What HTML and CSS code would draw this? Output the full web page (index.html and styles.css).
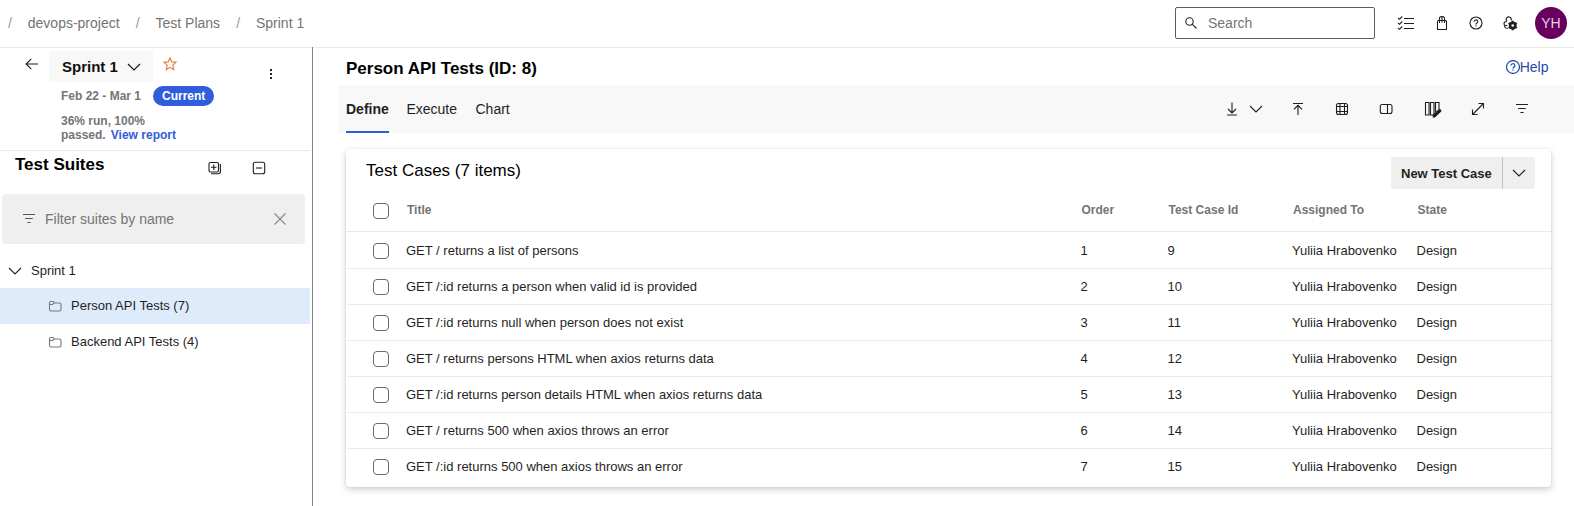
FILE: index.html
```html
<!DOCTYPE html>
<html lang="en">
<head>
<meta charset="utf-8">
<title>Sprint 1 - Test Plans</title>
<link rel="stylesheet" href="styles.css">
</head>
<body>
<svg class="defs" width="0" height="0">
  <symbol id="chevron" viewBox="0 0 16 16"><path d="M2 5l6 6 6-6"/></symbol>
  <symbol id="filter" viewBox="0 0 16 16"><path d="M2 3.500h12M4.200 7.500h7.600M6.400 11.500h3.200"/></symbol>
  <symbol id="folder" viewBox="0 0 16 16"><path d="M2.500 11.500v-6.500q0-1.500 1.500-1.500h2.200l1.300 1.500h5q1.500 0 1.500 1.500v5q0 1.500-1.500 1.500h-8.500q-1.500 0-1.500-1.500zM2.500 6.500h3l2-1.500"/></symbol>
  <symbol id="help" viewBox="0 0 16 16"><circle cx="8" cy="8" r="6"/><path d="M6.200 6.700a1.800 1.700 0 1 1 2.700 1.400q-.9.500-.9 1.400"/><path d="M8 10.300v1.200"/></symbol>
</svg>

<header class="topbar">
  <nav class="crumbs">
    <span class="slash">/</span><span>devops-project</span>
    <span class="slash">/</span><span>Test Plans</span>
    <span class="slash">/</span><span>Sprint 1</span>
  </nav>
  <div class="search">
    <svg class="icon" viewBox="0 0 16 16"><circle cx="6.500" cy="6.500" r="3.700"/><path d="M9.200 9.200l4.300 4.300"/></svg>
    <span>Search</span>
  </div>
  <div class="tools">
    <svg class="icon wide" viewBox="0 0 18 16"><path d="M7 3.500h10M7 8.500h10M7 13.500h10" stroke-width="1.200"/><path d="M1 3l1.500 1.300 2.700-2.800M1 8l1.500 1.300 2.700-2.800M1 13l1.500 1.300 2.700-2.800"/></svg>
    <svg class="icon" viewBox="0 0 16 16"><path d="M3.500 6.500q0-1 1-1h7q1 0 1 1v8h-9zM5.500 8v-4.500q0-2 2-2h1q2 0 2 2v4.500M8 1.500v6"/></svg>
    <svg class="icon"><use href="#help"/></svg>
    <svg class="icon" viewBox="0 0 16 16"><path d="M9 5.500a2.500 2.500 0 1 0-4 .8M4.500 6.500q-2.500 0-2.500 2.300 0 1.700 1.500 1.700h1.700M2.700 10.500q-.5 2.800 3.300 2.800"/><circle cx="10.700" cy="10.500" r="2.600" stroke-width="2.600"/><path d="M10.700 5.800v2M10.700 13.200v2M6.600 8.100l1.700 1M13.100 11.900l1.700 1M6.600 12.900l1.700-1M13.100 9.100l1.700-1" stroke-width="2"/></svg>
    <span class="avatar">YH</span>
  </div>
</header>

<div class="body">
  <aside class="sidebar">
    <section class="plan">
      <svg class="icon back" viewBox="0 0 16 16"><path d="M14 8H2.300M7.300 2.800L2.100 8l5.200 5.200"/></svg>
      <div class="plan-info">
        <div class="plan-line">
          <div class="plan-name"><span>Sprint 1</span><svg class="icon"><use href="#chevron"/></svg></div>
          <svg class="icon star" viewBox="0 0 16 16"><path d="M8 1.900l1.800 4 4.200.4-3.200 2.900.9 4.400L8 11.400l-3.700 2.200.9-4.400L2 6.300l4.200-.4z"/></svg>
        </div>
        <div class="plan-dates"><span>Feb 22 - Mar 1</span><span class="pill">Current</span></div>
        <div class="plan-stats">36% run, 100%<br>passed. <a class="report">View report</a></div>
      </div>
      <svg class="icon kebab" viewBox="0 0 16 16"><path d="M7 3h2v2H7zM7 7h2v2H7zM7 11h2v2H7z"/></svg>
    </section>
    <section class="suites-head">
      <h2>Test Suites</h2>
      <svg class="icon" viewBox="0 0 16 16"><rect x="2" y="2.500" width="9.500" height="9.500" rx="1.500"/><path d="M4 7.300h5.500M6.800 4.500v5.500M13.400 4v7.500q0 2.200-2.200 2.200H4"/></svg>
      <svg class="icon" viewBox="0 0 16 16"><rect x="2.300" y="2.300" width="11.400" height="11.400" rx="2"/><path d="M5 8h6"/></svg>
    </section>
    <div class="suite-filter">
      <svg class="icon"><use href="#filter"/></svg>
      <span>Filter suites by name</span>
      <svg class="icon clear" viewBox="0 0 16 16"><path d="M2.500 2.500l11 11M13.500 2.500l-11 11"/></svg>
    </div>
    <div class="tree">
      <div class="node root"><svg class="icon"><use href="#chevron"/></svg><span>Sprint 1</span></div>
      <div class="node leaf selected"><svg class="icon"><use href="#folder"/></svg><span>Person API Tests (7)</span></div>
      <div class="node leaf"><svg class="icon"><use href="#folder"/></svg><span>Backend API Tests (4)</span></div>
    </div>
  </aside>

  <main class="main">
    <div class="page-head">
      <h1>Person API Tests (ID: 8)</h1>
      <a class="help"><svg class="icon" viewBox="1.500 1.500 13 13"><use href="#help" width="16" height="16"/></svg>Help</a>
    </div>
    <div class="tabbar">
      <div class="tabs"><span class="tab active">Define</span><span class="tab">Execute</span><span class="tab">Chart</span></div>
      <div class="actions">
        <span class="pair">
          <svg class="icon" viewBox="0 0 16 16"><path d="M8 1.500v10M4 8l4 4 4-4M3 14h10" /></svg>
          <svg class="icon"><use href="#chevron"/></svg>
        </span>
        <svg class="icon" viewBox="0 0 16 16"><path d="M8 14V4.500M4 8.300l4-4 4 4M3 2.500h10"/></svg>
        <svg class="icon" viewBox="0 0 16 16"><rect x="2.500" y="2.500" width="11" height="11" rx="2"/><path d="M6 2.500v11M10.500 2.500v11M2.500 5.500h11M2.500 10.500h11"/></svg>
        <svg class="icon" viewBox="0 0 16 16"><rect x="2.300" y="3.500" width="11.700" height="9" rx="2"/><path d="M9.500 3.500v9"/></svg>
        <svg class="icon columns" viewBox="0 0 18 18"><path d="M1.500 2.500h3.500v12.500H1.500zM6.500 2.500h3.500v12.500H6.500zM11.500 12V2.500h3.500v7"/><path d="M10.500 15.500L15.500 10.800" stroke-width="3.600" stroke-linecap="round"/><path d="M8.500 17.800l1-3.500 2.500 2.500z" fill="currentColor" stroke="none"/></svg>
        <svg class="icon" viewBox="0 0 16 16"><path d="M2.500 13.500l11-11M8.500 2.500h5v5M2.500 8.500v5h5"/></svg>
        <svg class="icon"><use href="#filter"/></svg>
      </div>
    </div>

    <section class="card">
      <div class="card-head">
        <h3>Test Cases (7 items)</h3>
        <div class="split-button"><span class="label">New Test Case</span><span class="drop"><svg class="icon"><use href="#chevron"/></svg></span></div>
      </div>
      <div class="row head"><i class="check"></i><span>Title</span><span>Order</span><span>Test Case Id</span><span>Assigned To</span><span>State</span></div>
      <div class="row"><i class="check"></i><span>GET / returns a list of persons</span><span>1</span><span>9</span><span>Yuliia Hrabovenko</span><span>Design</span></div>
      <div class="row"><i class="check"></i><span>GET /:id returns a person when valid id is provided</span><span>2</span><span>10</span><span>Yuliia Hrabovenko</span><span>Design</span></div>
      <div class="row"><i class="check"></i><span>GET /:id returns null when person does not exist</span><span>3</span><span>11</span><span>Yuliia Hrabovenko</span><span>Design</span></div>
      <div class="row"><i class="check"></i><span>GET / returns persons HTML when axios returns data</span><span>4</span><span>12</span><span>Yuliia Hrabovenko</span><span>Design</span></div>
      <div class="row"><i class="check"></i><span>GET /:id returns person details HTML when axios returns data</span><span>5</span><span>13</span><span>Yuliia Hrabovenko</span><span>Design</span></div>
      <div class="row"><i class="check"></i><span>GET / returns 500 when axios throws an error</span><span>6</span><span>14</span><span>Yuliia Hrabovenko</span><span>Design</span></div>
      <div class="row"><i class="check"></i><span>GET /:id returns 500 when axios throws an error</span><span>7</span><span>15</span><span>Yuliia Hrabovenko</span><span>Design</span></div>
    </section>
  </main>
</div>
</body>
</html>
```

FILE: styles.css
```css
* { box-sizing: border-box; }
body {
  margin: 0;
  height: 506px;
  overflow: hidden;
  display: flex;
  flex-direction: column;
  background: #fff;
  color: #1f1f1f;
  font: 13px/16px "Liberation Sans", Arial, sans-serif;
  white-space: nowrap;
}
h1, h2, h3 { margin: 0; font-size: 17px; line-height: 20px; color: #000; }
.defs { display: none; }
.icon { width: 16px; height: 16px; flex: none; display: block; fill: none; stroke: currentColor; stroke-width: 1.1; }

/* Top bar */
.topbar { height: 48px; flex: none; display: flex; align-items: center; border-bottom: 1px solid #eaeaea; padding: 0 7px 1px 8px; }
.crumbs { flex: 1; display: flex; font-size: 14px; color: #737373; }
.crumbs span { margin-right: 16.100px; }
.crumbs .slash { margin-right: 15.900px; color: #999; }
.search { width: 200px; height: 32px; display: flex; align-items: center; gap: 9px; padding-left: 7px; border: 1px solid #5c5c5c; border-radius: 2px; font-size: 14px; color: #757575; }
.search .icon { color: #222; }
.tools { display: flex; align-items: center; gap: 18px; margin-left: 22px; }
.tools .wide { width: 18px; margin-right: 1px; }
.avatar { width: 32px; height: 32px; border-radius: 50%; background: #68005f; color: #e6cfe4; font-size: 14px; line-height: 32px; text-align: center; margin-left: -1px; }

.body { flex: 1; min-height: 0; display: flex; }

/* Sidebar */
.sidebar { width: 313px; flex: none; padding-right: 2px; margin-top: -1px; border-right: 1px solid #858585; }
.plan { height: 104px; display: flex; align-items: flex-start; border-bottom: 1px solid #e8e8e8; width: 310px; }
.back { margin: 9px 9px 0 24px; }
.plan-info { flex: 1; padding-top: 4px; }
.plan-line { display: flex; gap: 9px; }
.plan-name { width: 104px; height: 31px; display: flex; align-items: center; gap: 8px; padding: 1px 0 0 13px; background: #f8f8f8; border-radius: 2px; font-size: 15px; font-weight: bold; color: #111; }
.star { color: #e07b39; margin-top: 5px; }
.plan-dates { display: flex; align-items: center; height: 20px; margin: 4px 0 0 12px; gap: 12px; font-size: 12px; font-weight: bold; color: #757575; }
.pill { height: 20px; line-height: 20px; padding: 0 9px; border-radius: 10px; background: #2f5ddb; color: #fff; }
.plan-stats { margin: 8px 0 0 12px; font: bold 12px/14px "Liberation Sans", Arial, sans-serif; color: #757575; }
.report { color: #2f5ddb; margin-left: 1.800px; }
.kebab { margin: 19px 31px 0 0; fill: #222; stroke: none; }
.suites-head { height: 43px; display: flex; padding: 4px 43px 0 15px; }
.suites-head h2 { flex: 1; }
.suites-head .icon { margin-top: 5px; margin-left: 28px; }
.suite-filter { height: 50px; width: 303px; margin-left: 2px; display: flex; align-items: center; padding: 0 17px 0 19px; background: #efefef; border-radius: 4px; font-size: 14px; color: #757575; }
.suite-filter span { flex: 1; margin-left: 8px; }
.suite-filter .icon { color: #555; }
.suite-filter .clear { color: #888; }
.tree { padding-top: 8px; }
.node { height: 36px; width: 310px; display: flex; align-items: center; }
.root { padding: 2px 0 0 7px; gap: 8px; }
.leaf { padding-left: 47px; gap: 8px; }
.leaf .icon { color: #777; }
.selected { background: #deebfb; }

/* Main area */
.main { flex: 1; min-width: 0; padding-left: 25px; }
.page-head { height: 37px; display: flex; justify-content: space-between; align-items: flex-start; padding: 11px 25.500px 0 8px; }
.help { display: flex; align-items: center; font-size: 14px; color: #1f4aa8; }
.help .icon { width: 14px; height: 14px; }
.tabbar { height: 48px; display: flex; justify-content: space-between; background: #f8f8f8; padding: 0 44px 0 8px; }
.tabs { display: flex; gap: 18px; font-size: 14px; line-height: 48px; }
.active { font-weight: bold; border-bottom: 2px solid #2b5fd9; height: 48px; }
.tab + .tab { margin-left: -.400px; }
.tab:last-child { margin-left: .500px; }
.actions { display: flex; align-items: center; gap: 28px; }
.pair { display: flex; gap: 8px; margin-right: -2px; }
.columns { width: 18px; height: 18px; margin-left: 2px; }

/* Test case table */
.card { margin: 16px 23px 0 8px; height: 338px; border-radius: 4px; background: #fff; box-shadow: 0 3px 7px rgba(0,0,0,.17), 0 0 3px rgba(0,0,0,.1); }
.card-head { height: 40px; display: flex; justify-content: space-between; padding: 8px 16px 0 20px; }
.card-head h3 { font-weight: normal; margin-top: 4px; }
.split-button { display: flex; height: 32px; background: #efefef; border-radius: 2px; font-weight: bold; }
.label { width: 111px; padding: 9px 0 0 10px; }
.drop { width: 33px; border-left: 1px solid #c4c4c4; padding: 8px; }
.row { display: grid; grid-template-columns: 33px 674.500px 87px 124.500px 124.500px 1fr; align-items: center; height: 36px; margin-left: 1px; padding-left: 26px; border-bottom: 1px solid #eaeaea; }
.row:last-child { border-bottom: 0; }
.row.head { height: 43px; margin-left: 0; padding: 0 0 0 28px; font-size: 12px; font-weight: bold; color: #757575; }
.row.head .check { margin: 1px 0 0 -1px; }
.row.head + .row { height: 37px; padding-top: 1px; }
.check { width: 16px; height: 16px; border: 1px solid #6b6b6b; border-radius: 4px; }
```
